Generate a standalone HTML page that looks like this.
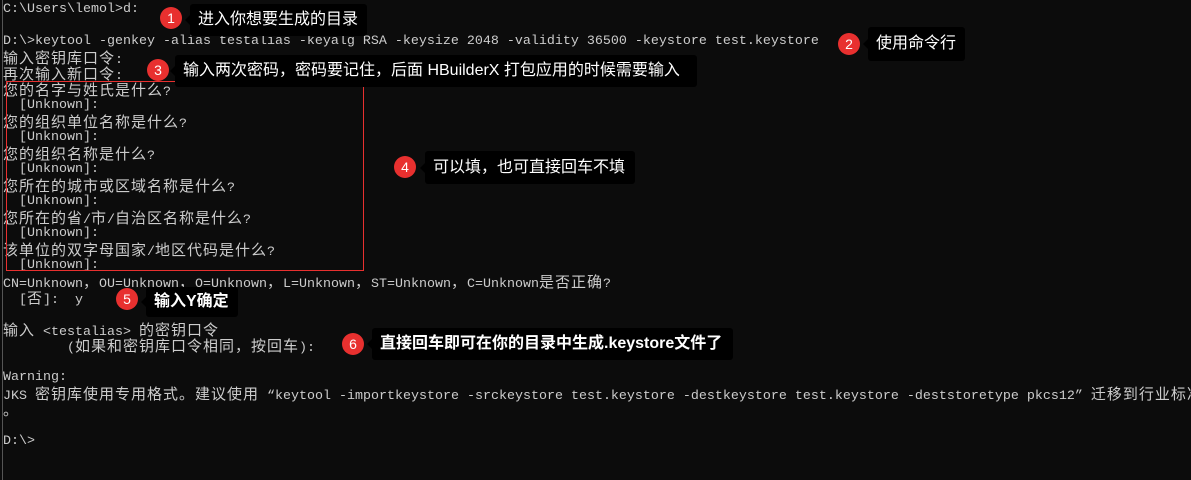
<!DOCTYPE html>
<html><head><meta charset="utf-8"><style>
body{margin:0;width:1191px;height:480px;background:#0c0c0c;overflow:hidden;position:relative;font-family:"Liberation Mono","Noto Sans CJK SC",monospace;color:#cccccc}
.l{position:absolute;left:3px;font-size:13.33px;line-height:16px;height:16px;white-space:pre}
.c{font-weight:normal;font-size:15px;letter-spacing:1px;font-family:"Noto Sans CJK SC",sans-serif;line-height:16px}
.edge{position:absolute;left:2px;top:0;width:1px;height:480px;background:#555}
.circ{position:absolute;width:22px;height:22px;border-radius:50%;background:#e8302f;color:#fff;font:14px/22px "Liberation Sans",sans-serif;text-align:center}
.box{position:absolute;background:#000;color:#fff;border-radius:3px;font-family:"Liberation Sans","Noto Sans CJK SC",sans-serif;font-size:16px;padding-left:8px;box-sizing:border-box;white-space:nowrap}
.box:before{content:"";position:absolute;left:-5px;top:50%;margin-top:-5px;border:5px solid transparent;border-left:0;border-right-color:#000}
.red{position:absolute;left:6px;top:81px;width:358px;height:190px;border:1px solid #e8302f;box-sizing:border-box}
</style></head><body>
<div class="edge"></div>
<div class="l" style="top:2px">C:\Users\lemol&gt;d:</div>
<div class="l" style="top:34px">D:\&gt;keytool -genkey -alias testalias -keyalg RSA -keysize 2048 -validity 36500 -keystore test.keystore</div>
<div class="l" style="top:50px"><b class="c">输入密钥库口令</b>:</div>
<div class="l" style="top:66px"><b class="c">再次输入新口令</b>:</div>
<div class="l" style="top:82px"><b class="c">您的名字与姓氏是什么</b>?</div>
<div class="l" style="top:98px">  [Unknown]:</div>
<div class="l" style="top:114px"><b class="c">您的组织单位名称是什么</b>?</div>
<div class="l" style="top:130px">  [Unknown]:</div>
<div class="l" style="top:146px"><b class="c">您的组织名称是什么</b>?</div>
<div class="l" style="top:162px">  [Unknown]:</div>
<div class="l" style="top:178px"><b class="c">您所在的城市或区域名称是什么</b>?</div>
<div class="l" style="top:194px">  [Unknown]:</div>
<div class="l" style="top:210px"><b class="c">您所在的省</b>/<b class="c">市</b>/<b class="c">自治区名称是什么</b>?</div>
<div class="l" style="top:226px">  [Unknown]:</div>
<div class="l" style="top:242px"><b class="c">该单位的双字母国家</b>/<b class="c">地区代码是什么</b>?</div>
<div class="l" style="top:258px">  [Unknown]:</div>
<div class="l" style="top:274px">CN=Unknown<b class="c">，</b>OU=Unknown<b class="c">，</b>O=Unknown<b class="c">，</b>L=Unknown<b class="c">，</b>ST=Unknown<b class="c">，</b>C=Unknown<b class="c">是否正确</b>?</div>
<div class="l" style="top:290px">  [<b class="c">否</b>]:  y</div>
<div class="l" style="top:322px"><b class="c">输入</b> &lt;testalias&gt; <b class="c">的密钥口令</b></div>
<div class="l" style="top:338px">        (<b class="c">如果和密钥库口令相同，按回车</b>):</div>
<div class="l" style="top:370px">Warning:</div>
<div class="l" style="top:386px">JKS <b class="c">密钥库使用专用格式。建议使用</b> “keytool -importkeystore -srckeystore test.keystore -destkeystore test.keystore -deststoretype pkcs12” <b class="c">迁移到行业标准格式</b></div>
<div class="l" style="top:402px"><b class="c">。</b></div>
<div class="l" style="top:434px">D:\&gt;</div>
<div class="red"></div>

<div class="circ" style="left:160px;top:7px">1</div>
<div class="box" style="left:190px;top:4px;width:177px;height:32px;line-height:32px">进入你想要生成的目录</div>
<div class="circ" style="left:838px;top:33px">2</div>
<div class="box" style="left:868px;top:27px;width:97px;height:34px;line-height:34px">使用命令行</div>
<div class="circ" style="left:147px;top:59px">3</div>
<div class="box" style="left:175px;top:55px;width:522px;height:32px;line-height:32px">输入两次密码，密码要记住，后面 HBuilderX 打包应用的时候需要输入</div>
<div class="circ" style="left:394px;top:156px">4</div>
<div class="box" style="left:425px;top:151px;width:210px;height:33px;line-height:33px">可以填，也可直接回车不填</div>
<div class="circ" style="left:116px;top:288px">5</div>
<div class="box" style="left:146px;top:287px;width:92px;height:30px;line-height:30px;font-weight:bold">输入Y确定</div>
<div class="circ" style="left:342px;top:333px">6</div>
<div class="box" style="left:372px;top:328px;width:361px;height:32px;line-height:32px;font-weight:bold">直接回车即可在你的目录中生成.keystore文件了</div>
</body></html>
